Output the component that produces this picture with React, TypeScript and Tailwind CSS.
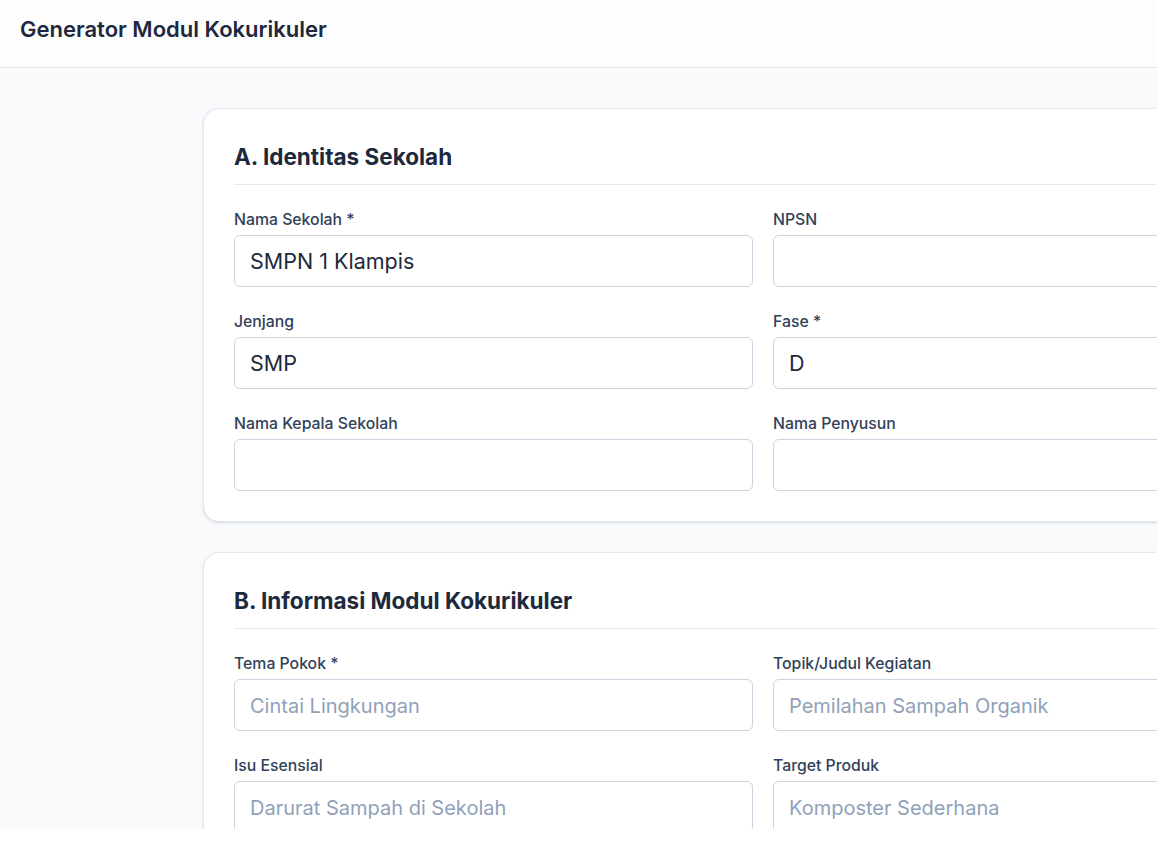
import React from "react";

type Field = {
  label: string;
  value?: string;
  placeholder?: string;
};

const identitas: Field[] = [
  { label: "Nama Sekolah *", value: "SMPN 1 Klampis" },
  { label: "NPSN" },
  { label: "Jenjang", value: "SMP" },
  { label: "Fase *", value: "D" },
  { label: "Nama Kepala Sekolah" },
  { label: "Nama Penyusun" },
];

const informasi: Field[] = [
  { label: "Tema Pokok *", placeholder: "Cintai Lingkungan" },
  { label: "Topik/Judul Kegiatan", placeholder: "Pemilahan Sampah Organik" },
  { label: "Isu Esensial", placeholder: "Darurat Sampah di Sekolah" },
  { label: "Target Produk", placeholder: "Komposter Sederhana" },
];

function FormField({ label, value, placeholder }: Field) {
  return (
    <div className="flex flex-col">
      <label className="text-[15.8px] font-medium text-slate-700 leading-6 mb-[3px]">{label}</label>
      <input
        type="text"
        defaultValue={value}
        placeholder={placeholder}
        className="h-[52px] w-full rounded-md border border-slate-300 bg-white px-[15px] text-[21.5px] text-slate-800 placeholder:text-[20px] placeholder:text-slate-400 outline-none"
      />
    </div>
  );
}

function Section({ title, fields }: { title: string; fields: Field[] }) {
  return (
    <section className="w-[1120px] rounded-2xl border border-slate-200 bg-white px-[30px] pt-8 pb-[30px] shadow-sm">
      <h2 className="text-[22.5px] leading-8 font-bold text-slate-800 pb-[11px] border-b border-slate-200">{title}</h2>
      <div className="mt-[23px] grid grid-cols-2 gap-x-5 gap-y-[23px]">
        {fields.map((f) => (
          <FormField key={f.label} {...f} />
        ))}
      </div>
    </section>
  );
}

export default function App() {
  return (
    <div className="h-[852px] bg-white" style={{ fontFamily: "Inter, 'Noto Sans', sans-serif" }}>
      <header className="h-[68px] px-5 pt-[15px] border-b border-slate-200 bg-[#fdfdfd]">
        <h1 className="text-[22px] leading-[28px] font-semibold text-slate-800">Generator Modul Kokurikuler</h1>
      </header>
      <main className="h-[761px] overflow-hidden bg-slate-50 pt-10 pl-[203px]">
        <div className="flex flex-col gap-[30px]">
          <Section title="A. Identitas Sekolah" fields={identitas} />
          <Section title="B. Informasi Modul Kokurikuler" fields={informasi} />
        </div>
      </main>
    </div>
  );
}
